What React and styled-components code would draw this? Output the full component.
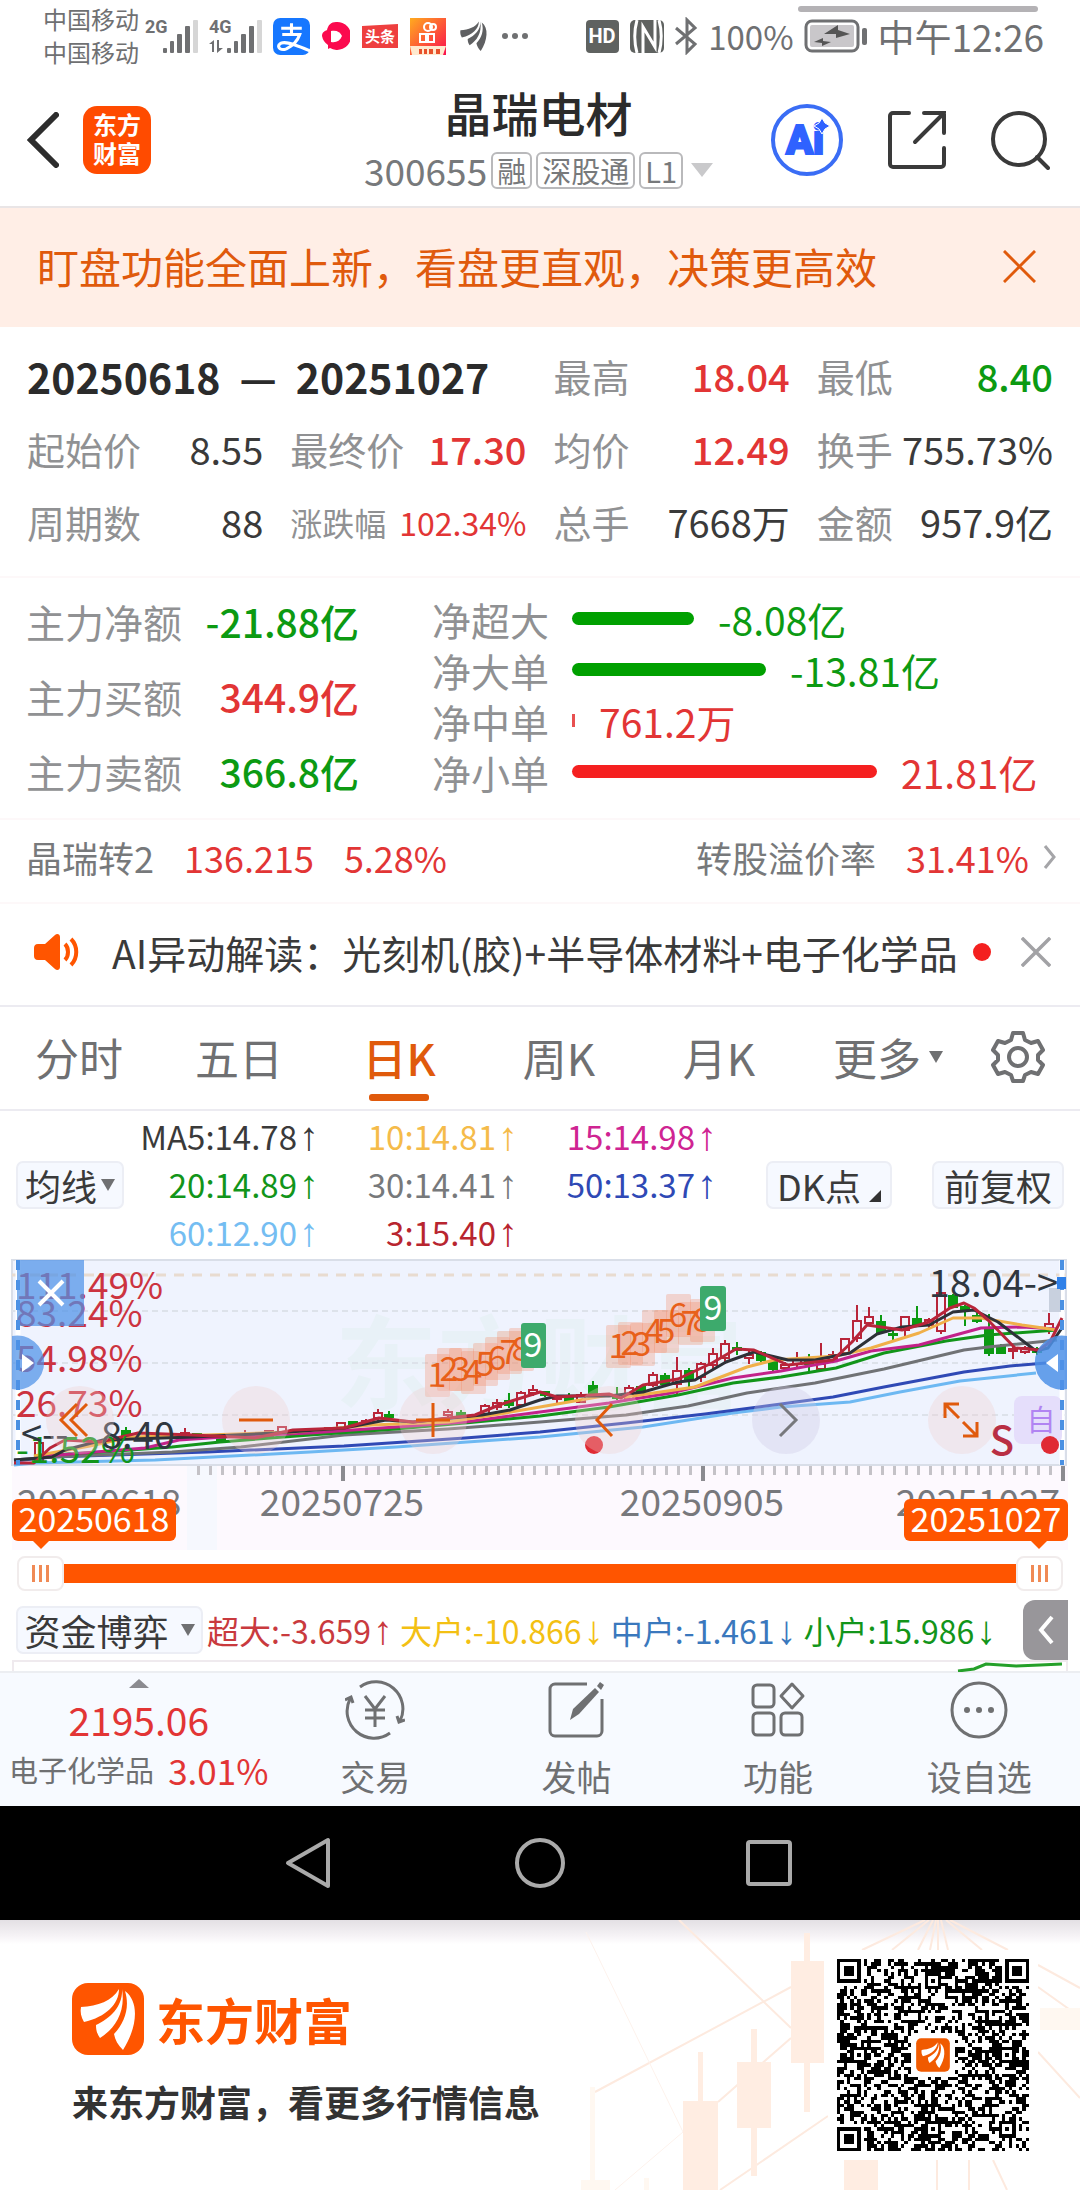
import React, { useState } from "react";
import styled, { createGlobalStyle, css } from "styled-components";

const GlobalStyle = createGlobalStyle`
  * {
    box-sizing: border-box;
  }
  body {
    margin: 0;
    background: #fff;
    color: #333;
    font-family: "Noto Sans CJK SC", sans-serif;
  }
  button {
    margin: 0;
    padding: 0;
    border: 0;
    background: none;
    color: inherit;
    font: inherit;
    cursor: pointer;
  }
  svg {
    display: block;
  }
`;

const RED = "#e23535";
const GREEN = "#0c9a12";
const ORANGE = "#e05a0c";

const Page = styled.div`
  width: 100%;
  overflow: hidden;
`;

/* ---------- status bar ---------- */

const StatusBar = styled.div`
  position: relative;
  display: flex;
  justify-content: space-between;
  height: 75px;
  padding: 4px 36px 0 43px;
  color: #6f7072;
`;
const ScrollHint = styled.div`
  position: absolute;
  top: 6px;
  right: 42px;
  width: 240px;
  height: 6px;
  border-radius: 3px;
  background: #b4b2b5;
`;
const Carriers = styled.div`
  display: flex;
  flex-direction: column;
  justify-content: center;
  height: 62px;
  margin-right: 6px;
  font-size: 24px;
  line-height: 33px;
`;
const StatusGroup = styled.div`
  display: flex;
  height: 64px;
  align-items: center;
  gap: ${(p) => p.$gap}px;
`;
const StatusLeft = styled.div`
  display: flex;
`;
const StatusText = styled.span`
  font-size: ${(p) => p.$size}px;
  line-height: 40px;
`;

/* ---------- header ---------- */

const Header = styled.header`
  display: grid;
  grid-template-columns: 1fr auto 1fr;
  align-items: center;
  height: 133px;
  padding: 0 30px 2px 27px;
  border-bottom: 2px solid #e9e5e6;
`;
const HeaderLeft = styled.div`
  display: flex;
  align-items: center;
  gap: 24px;
`;
const HeaderRight = styled.div`
  display: flex;
  align-items: center;
  justify-content: flex-end;
  gap: 43px;
`;
const AppBadge = styled.div`
  width: 68px;
  height: 68px;
  padding-top: 3px;
  border-radius: 14px;
  background: #ff4b00;
  color: #fff;
  font-size: 24px;
  font-weight: 700;
  line-height: 29px;
  text-align: center;
`;
const TitleBlock = styled.div`
  display: flex;
  flex-direction: column;
  align-items: center;
  gap: 7px;
  padding-bottom: 10px;
`;
const Title = styled.h1`
  margin: 0;
  font-size: 47px;
  font-weight: 500;
  line-height: 64px;
  color: #2b2b2b;
`;
const CodeRow = styled.div`
  display: flex;
  align-items: center;
  gap: 4px;
  color: #77797b;
  font-size: 37px;
  line-height: 38px;
`;
const Tag = styled.span`
  height: 37px;
  padding: 0 4px;
  border: 2px solid #b9b9bb;
  border-radius: 6px;
  font-size: 29px;
  line-height: 32px;
`;

/* ---------- banner ---------- */

const Banner = styled.section`
  display: flex;
  align-items: center;
  justify-content: space-between;
  height: 119px;
  padding: 0 44px 3px 37px;
  background: #ffeee6;
  color: ${ORANGE};
  font-size: 42px;
  line-height: 60px;
`;

/* ---------- stats ---------- */

const Stats = styled.section`
  display: grid;
  grid-template-columns: repeat(4, 1fr);
  column-gap: 27px;
  grid-auto-rows: 73px;
  padding: 12px 27px 18px;
  border-bottom: 2px solid #fdf8f9;
`;
const DateRange = styled.div`
  grid-column: span 2;
  display: flex;
  align-items: center;
  gap: 19px;
  color: #2b2b2b;
  font-size: 41px;
  font-weight: 700;
`;
const Stat = styled.div`
  display: flex;
  align-items: center;
  justify-content: space-between;
  white-space: nowrap;
  font-size: ${(p) => p.$size || 38}px;
`;
const Label = styled.span`
  color: #909193;
`;
const Value = styled.span`
  color: ${(p) => p.$color || "#3a3a3a"};
  font-weight: ${(p) => (p.$medium ? 500 : 400)};
`;

/* ---------- capital flow ---------- */

const Flow = styled.section`
  display: grid;
  grid-template-columns: 333px 1fr;
  column-gap: 73px;
  padding: 5px 27px 10px 26px;
  border-bottom: 2px solid #fdf8f9;
`;
const FlowTotals = styled.div`
  display: grid;
  grid-auto-rows: 75px;
`;
const FlowBars = styled.div`
  display: grid;
  grid-auto-rows: 51px;
  padding-top: 10px;
`;
const FlowRow = styled.div`
  display: flex;
  align-items: center;
  font-size: 39px;
`;
const FlowBar = styled.div`
  height: 13px;
  margin: 0 24px 0 23px;
  border-radius: ${(p) => (p.$thin ? 0 : 7)}px;
  background: ${(p) => p.$color};
`;

/* ---------- bond + news ---------- */

const Bond = styled.a`
  display: flex;
  align-items: center;
  height: 84px;
  padding: 0 23px 9px 26px;
  border-bottom: 2px solid #fdf8f9;
  color: #77797b;
  font-size: 36px;
  text-decoration: none;
`;
const BondValue = styled.span`
  margin-left: 30px;
  color: ${RED};
`;
const Spacer = styled.span`
  flex: 1;
`;
const News = styled.section`
  display: flex;
  align-items: center;
  height: 103px;
  padding: 0 29px 6px 34px;
  border-bottom: 2px solid #ecebf1;
  color: #3a3a3a;
  font-size: 39px;
  white-space: nowrap;
`;
const NewsText = styled.span`
  flex: 1;
  margin-left: 32px;
`;
const Dot = styled.span`
  width: 18px;
  height: 18px;
  margin-right: 30px;
  border-radius: 50%;
  background: #f4201f;
`;

/* ---------- tabs ---------- */

const Tabs = styled.nav`
  display: grid;
  grid-template-columns: repeat(5, 160fr) 178fr 82fr;
  height: 104px;
  padding-right: 20px;
  border-bottom: 2px solid #ecebf1;
`;
const Tab = styled.button`
  display: flex;
  align-items: center;
  justify-content: center;
  gap: 8px;
  position: relative;
  padding: 0 2px 2px 0;
  color: ${(p) => (p.$active ? ORANGE : "#6f7072")};
  font-size: 44px;
  ${(p) =>
    p.$active &&
    css`
      font-weight: 500;
      &::after {
        content: "";
        position: absolute;
        bottom: 8px;
        width: 60px;
        height: 7px;
        border-radius: 3px;
        background: ${ORANGE};
      }
    `}
`;
const Triangle = styled.span`
  width: 0;
  height: 0;
  border: ${(p) => p.$size || 7}px solid transparent;
  border-bottom: 0;
  border-top: ${(p) => p.$tall || 12}px solid ${(p) => p.$color || "#6f7072"};
`;

/* ---------- moving averages ---------- */

const Averages = styled.section`
  display: flex;
  align-items: center;
  justify-content: space-between;
  height: 148px;
  padding: 0 16px;
`;
const AverageGrid = styled.div`
  display: grid;
  grid-template-columns: 195px 199px 199px;
  grid-auto-rows: 48px;
  margin-right: auto;
`;
const Average = styled.span`
  color: ${(p) => p.$color};
  font-size: ${(p) => p.$size || 33}px;
  line-height: 46px;
  text-align: right;
`;
const Arrow = styled.span`
  margin-left: 2px;
  font-family: "Liberation Sans", sans-serif;
  font-size: 40px;
`;
const Chip = styled.button`
  display: flex;
  align-items: center;
  justify-content: center;
  gap: ${(p) => p.$inner || 4}px;
  width: ${(p) => p.$width}px;
  height: 48px;
  margin-left: ${(p) => p.$gap || 0}px;
  border: 2px solid #eceef5;
  border-radius: 7px;
  background: #f6f9ff;
  color: #3a3a3a;
  font-size: 36px;
  line-height: 42px;
  white-space: nowrap;
`;
const Corner = styled.span`
  align-self: flex-end;
  margin-bottom: 5px;
  border-left: 12px solid transparent;
  border-bottom: 12px solid #333;
`;

/* ---------- chart ---------- */

const Chart = styled.section`
  position: relative;
`;
const ChartSvg = styled.svg`
  width: 100%;
  height: auto;
  font-family: "Noto Sans CJK SC", sans-serif;
`;
const ChartTools = styled.div`
  position: absolute;
  top: 127px;
  left: 46px;
  right: 84px;
  display: flex;
  justify-content: space-between;
`;
const ToolButton = styled.button`
  width: 68px;
  height: 68px;
  border-radius: 50%;
  background: ${(p) => (p.$muted ? "rgba(205, 200, 230, 0.35)" : "rgba(238, 205, 205, 0.32)")};
`;
const DateFlag = styled.output`
  position: absolute;
  bottom: 9px;
  ${(p) => (p.$right ? "right: 12px" : "left: 12px")};
  width: 164px;
  height: 42px;
  border-radius: 6px;
  background: #ff5500;
  color: #fff;
  font-size: 34px;
  line-height: 38px;
  text-align: center;
  &::after {
    content: "";
    position: absolute;
    top: 41px;
    ${(p) => (p.$right ? "right: 20px" : "left: 20px")};
    border: 9px solid transparent;
    border-top-color: #ff5500;
    border-bottom: 0;
  }
`;
const CloseRange = styled.button`
  position: absolute;
  top: 1px;
  left: 17px;
  width: 67px;
  height: 66px;
  background: rgba(77, 145, 232, 0.72);
`;

/* ---------- range slider ---------- */

const Range = styled.div`
  position: relative;
  height: 50px;
  padding: 14px 17px 0;
`;
const RangeFill = styled.div`
  height: 19px;
  background: #ff5500;
`;
const thumb = css`
  appearance: none;
  width: 47px;
  height: 35px;
  border: 2px solid #f1ecec;
  border-radius: 8px;
  background:
    linear-gradient(#f08a55, #f08a55) 13px 7px / 3px 17px no-repeat,
    linear-gradient(#f08a55, #f08a55) 20px 7px / 3px 17px no-repeat,
    linear-gradient(#f08a55, #f08a55) 27px 7px / 3px 17px no-repeat,
    #fff;
  pointer-events: auto;
`;
const RangeInput = styled.input`
  appearance: none;
  position: absolute;
  top: 5px;
  left: 17px;
  width: calc(100% - 34px);
  height: 37px;
  margin: 0;
  background: none;
  pointer-events: none;
  &::-webkit-slider-thumb {
    ${thumb}
  }
  &::-moz-range-thumb {
    ${thumb}
  }
`;

/* ---------- fund indicator ---------- */

const Fund = styled.section`
  display: flex;
  align-items: center;
  height: 60px;
  padding: 0 12px 0 16px;
  white-space: nowrap;
`;
const FundValues = styled.div`
  flex: 1;
  display: flex;
  gap: 7px;
  margin-left: 4px;
`;
const Collapse = styled.button`
  display: flex;
  align-items: center;
  justify-content: center;
  width: 45px;
  height: 60px;
  border-radius: 12px 0 0 12px;
  background: #98969a;
`;
const FundChart = styled.div`
  display: flex;
  justify-content: flex-end;
  height: 11px;
  margin: 0 12px;
  border: 2px solid #efeaee;
  border-bottom: 0;
`;

/* ---------- bottom bar ---------- */

const BottomBar = styled.nav`
  display: grid;
  grid-template-columns: 274fr repeat(4, 201fr);
  height: 135px;
  border-top: 2px solid #eceef2;
  background: #f7faff;
  color: #6f7072;
`;
const IndexButton = styled.button`
  display: flex;
  flex-direction: column;
  align-items: center;
  padding: 6px 0 0 3px;
  white-space: nowrap;
`;
const IndexPrice = styled.span`
  height: 48px;
  margin-top: 7px;
  color: ${RED};
  font-size: 39px;
  line-height: 48px;
`;
const IndexRow = styled.span`
  display: flex;
  align-items: center;
  gap: 14px;
  height: 52px;
  font-size: 29px;
`;
const IndexChange = styled.span`
  color: ${RED};
  font-size: 35px;
`;
const NavButton = styled.button`
  display: flex;
  flex-direction: column;
  align-items: center;
  padding-top: 6px;
  font-size: 35px;
  line-height: 46px;
`;
const NavLabel = styled.span`
  margin-top: 12px;
`;
const SystemBar = styled.div`
  display: flex;
  align-items: center;
  justify-content: center;
  gap: 178px;
  height: 114px;
  background: #000;
`;

/* ---------- footer ---------- */

const Footer = styled.footer`
  position: relative;
  display: flex;
  justify-content: space-between;
  height: 270px;
  padding: 30px 42px 0 72px;
  background: linear-gradient(#e3e0e4, #f6f3f6 16px, #fff 24px);
`;
const FooterArt = styled.svg`
  position: absolute;
  top: 0;
  right: 0;
  width: 1080px;
  height: 270px;
`;
const Brand = styled.div`
  position: relative;
  display: flex;
  flex-direction: column;
  gap: 22px;
  padding-top: 33px;
`;
const BrandRow = styled.div`
  display: flex;
  align-items: center;
  gap: 12px;
  color: #ff5500;
  font-size: 49px;
  font-weight: 700;
  line-height: 70px;
`;
const Slogan = styled.p`
  margin: 0;
  color: #333;
  font-size: 36px;
  font-weight: 700;
  line-height: 48px;
`;
const QrBox = styled.div`
  position: relative;
  width: 210px;
  height: 210px;
  padding: 9px;
  background: #fff;
`;

/* ---------- data ---------- */

const stats = [
  ["最高", "18.04", RED],
  ["最低", "8.40", GREEN],
  ["起始价", "8.55"],
  ["最终价", "17.30", RED],
  ["均价", "12.49", RED],
  ["换手", "755.73%"],
  ["周期数", "88"],
  ["涨跌幅", "102.34%", RED, 32],
  ["总手", "7668万"],
  ["金额", "957.9亿"],
];

const totals = [
  ["主力净额", "-21.88亿", GREEN],
  ["主力买额", "344.9亿", RED],
  ["主力卖额", "366.8亿", GREEN],
];

const orders = [
  ["净超大", "-8.08亿", 122, GREEN, "#00a000"],
  ["净大单", "-13.81亿", 194, GREEN, "#00a000"],
  ["净中单", "761.2万", 3, RED, "#e85050"],
  ["净小单", "21.81亿", 305, RED, "#f52020"],
];

const averages = [
  ["MA5:14.78", "#3a3a3a"],
  ["10:14.81", "#f5bb4a"],
  ["15:14.98", "#cf2492"],
  ["20:14.89", "#12951a"],
  ["30:14.41", "#77797b"],
  ["50:13.37", "#2f49b5"],
  ["60:12.90", "#74bdf2"],
  ["3:15.40", "#b8252f"],
];

const funds = [
  ["超大:-3.659", "↑", "#c93a3e"],
  ["大户:-10.866", "↓", "#f3c013"],
  ["中户:-1.461", "↓", "#3a78bd"],
  ["小户:15.986", "↓", "#12951a"],
];

const tabs = ["分时", "五日", "日K", "周K", "月K"];

const lines = [
  ["#6db8f2", "14,215 34,213 155,210 310,202 396,197 540,187 643,177 733,163 781,157 850,152 900,142 960,131 1036,123"],
  ["#2f49b5", "14,211 52,207 207,202 344,196 465,188 540,182 626,173 705,164 781,154 833,147 884,137 964,122 1010,116 1046,113"],
  ["#707275", "14,210 52,207 172,202 241,197 344,185 448,179 540,172 626,165 688,156 747,143 815,133 884,119 964,100 988,97 1057,90"],
  ["#12951a", "34,206 103,202 172,197 220,192 310,185 396,179 465,173 540,166 609,157 678,145 733,133 781,127 836,118 884,103 946,91 988,85 1057,80"],
  ["#c2228a", "34,207 145,198 179,190 224,187 310,183 396,177 465,172 540,162 609,153 671,143 733,128 781,121 836,111 871,101 919,95 981,78 1022,77 1057,79"],
  ["#f0b04a", "34,206 90,196 131,187 207,185 293,182 372,175 448,172 500,164 540,157 609,145 626,147 695,137 747,117 774,110 836,106 871,98 919,83 953,68 981,68 1022,75 1057,80"],
  ["#2d3138", "14,210 52,207 65,200 103,190 193,187 275,183 344,178 386,170 413,172 482,165 510,160 540,150 557,146 609,146 643,142 678,132 695,130 726,112 754,102 788,110 815,110 850,103 877,84 902,77 929,75 953,62 974,60 998,72 1036,101 1048,98 1062,78"],
  ["#b8253a", "14,213 34,213 50,198 65,190 100,192 138,183 193,185 255,188 293,180 344,178 379,168 413,172 475,165 499,155 540,142 557,147 609,144 621,148 643,135 678,129 712,113 736,99 754,100 788,115 833,110 852,92 867,75 902,80 929,72 950,58 964,53 974,58 988,70 1015,98 1039,100 1050,92 1062,68"],
];

// x, high, body top, body bottom, low, rising
const candles = [
  [39, 187, 193, 212, 212, 1],
  [126, 177, 181, 185, 187, 0],
  [185, 178, 183, 188, 188, 1],
  [197, 183, 184, 186, 187, 0],
  [221, 186, 189, 191, 193, 0],
  [245, 180, 184, 187, 190, 1],
  [257, 182, 184, 186, 188, 0],
  [269, 180, 181, 187, 188, 1],
  [282, 176, 177, 182, 184, 1],
  [329, 177, 178, 181, 182, 1],
  [341, 172, 173, 179, 180, 1],
  [353, 171, 172, 174, 175, 0],
  [366, 169, 171, 174, 176, 1],
  [378, 159, 163, 168, 171, 1],
  [389, 161, 165, 167, 170, 0],
  [448, 159, 162, 165, 167, 1],
  [461, 160, 163, 165, 166, 0],
  [485, 154, 156, 164, 165, 1],
  [497, 149, 153, 157, 160, 1],
  [509, 143, 151, 155, 158, 0],
  [521, 141, 143, 155, 157, 1],
  [533, 135, 140, 143, 146, 1],
  [545, 141, 142, 145, 147, 0],
  [557, 146, 147, 149, 153, 1],
  [569, 143, 146, 151, 152, 0],
  [581, 142, 145, 152, 153, 1],
  [593, 131, 136, 143, 145, 0],
  [617, 137, 146, 148, 150, 0],
  [629, 135, 138, 149, 151, 1],
  [641, 136, 137, 141, 143, 0],
  [653, 122, 125, 135, 137, 1],
  [665, 123, 126, 134, 136, 0],
  [677, 107, 121, 134, 146, 1],
  [689, 118, 121, 130, 137, 0],
  [701, 112, 114, 127, 132, 1],
  [713, 98, 104, 115, 119, 1],
  [725, 90, 94, 108, 114, 1],
  [737, 92, 98, 100, 105, 0],
  [749, 101, 105, 108, 114, 1],
  [761, 101, 103, 110, 112, 0],
  [773, 109, 112, 119, 121, 0],
  [785, 112, 115, 118, 120, 1],
  [797, 102, 109, 114, 117, 1],
  [809, 104, 112, 114, 123, 0],
  [821, 93, 114, 119, 120, 1],
  [833, 101, 105, 110, 112, 1],
  [845, 88, 89, 103, 105, 1],
  [857, 55, 71, 88, 92, 1],
  [869, 57, 67, 73, 76, 1],
  [881, 65, 72, 82, 84, 0],
  [893, 80, 84, 85, 90, 0],
  [905, 66, 67, 80, 86, 1],
  [917, 56, 69, 74, 76, 0],
  [929, 68, 70, 75, 79, 1],
  [941, 42, 43, 81, 84, 1],
  [953, 44, 46, 57, 58, 0],
  [965, 55, 57, 60, 76, 0],
  [977, 63, 66, 71, 73, 0],
  [989, 64, 78, 103, 106, 0],
  [1001, 94, 97, 103, 104, 0],
  [1013, 96, 99, 101, 109, 1],
  [1025, 96, 98, 102, 104, 1],
  [1037, 97, 99, 102, 105, 0],
  [1049, 63, 74, 80, 84, 1],
];

// x, box top
const countFirst = [[437, 104], [449, 98], [461, 98], [473, 101], [485, 93], [497, 87], [509, 81], [521, 78]];
const countSecond = [[618, 75], [630, 72], [642, 73], [654, 60], [666, 60], [678, 44], [690, 52], [702, 49]];

const ticks = [];
for (let x = 198; x <= 1062; x += 12) {
  ticks.push(x);
}

/* ---------- drawings ---------- */

const Feather = () => (
  <>
    <path d="M9 24C26 23 40 18 47 6c0 15-13 28-35 33-3-5-4-10-3-15z" />
    <path d="M50 6c1 17-11 29-26 36 0 5 1 9 4 13C42 46 54 30 50 6z" />
    <path d="M53 8c5 16 0 31-11 43 1 6 4 11 9 16 14-22 17-48 2-59z" />
  </>
);

const Signal = ({ label, data }) => (
  <svg width="54" height="38" viewBox="0 0 54 38" fill="#6f7072">
    <text x="0" y="16" fontSize="18" fontWeight="700" fontFamily="Roboto, sans-serif">
      {label}
    </text>
    {data && <path d="M5 23v12H3v-8H0zM8 23h2v8h4l-6 5z" />}
    <rect x="18" y="31" width="4" height="5" rx="1" />
    <rect x="25" y="24" width="4" height="12" rx="1" />
    <rect x="32" y="17" width="5" height="19" rx="1" />
    <rect x="40" y="9" width="5" height="27" rx="1" />
    <rect x="48" y="3" width="5" height="33" rx="1" fill="#d6d6d6" />
  </svg>
);

const Cross = ({ size, color, width }) => (
  <svg width={size} height={size} viewBox="0 0 34 34" stroke={color} strokeWidth={width} fill="none">
    <path d="M1 1l32 32M33 1L1 33" />
  </svg>
);

const StatusIcons = () => (
  <StatusGroup $gap={12}>
    <svg width="37" height="37" viewBox="0 0 36 36">
      <rect width="36" height="36" rx="7" fill="#1677ff" />
      <g stroke="#fff" strokeWidth="3" fill="none">
        <path d="M8 10h20M18 5v11M9 16h17c-2 6-7 11-13 14-5 2-9-1-7-4 3-5 14-1 30 6" />
      </g>
    </svg>
    <svg width="28" height="37" viewBox="0 0 28 37">
      <path d="M14 4a14 14 0 1 1-6 26l-2 1 0-4A14 14 0 0 1 0 18c0-4 3-5 5-6 1-5 4-8 9-8z" fill="#fb0a4e" />
      <path d="M9 13c6-1 9 1 11 5-2 5-6 7-11 6z" fill="#fff" />
    </svg>
    <svg width="36" height="37" viewBox="0 0 36 37">
      <path d="M0 8l36-2v24H0z" fill="#ee3f3f" />
      <text x="18" y="24" fontSize="15" fontWeight="700" fill="#fff" textAnchor="middle">
        头条
      </text>
    </svg>
    <svg width="36" height="37" viewBox="0 0 36 37">
      <defs>
        <linearGradient id="lite" x1="0" y1="0" x2="1" y2="1">
          <stop offset="0" stopColor="#ffab1f" />
          <stop offset="1" stopColor="#fb0f4d" />
        </linearGradient>
      </defs>
      <rect width="36" height="37" fill="url(#lite)" />
      <g stroke="#fff" strokeWidth="2" fill="none">
        <circle cx="18" cy="9" r="4" />
        <circle cx="23" cy="9" r="3" />
        <path d="M10 16h6v8h-6zM18 16h6v8h-6z" />
      </g>
      <path d="M0 28h36l-3 9H2z" fill="#ffe9cf" />
      <path d="M9 31h3v5H9zM14 31h3v5h-3zM19 31h4v5h-4zM26 31h4v5h-4z" fill="#e8512b" />
    </svg>
    <svg width="32" height="34" viewBox="4 2 66 68" fill="#5f6062">
      <Feather />
    </svg>
    <svg width="26" height="6" viewBox="0 0 26 6" fill="#6f7072">
      <circle cx="3" cy="3" r="3" />
      <circle cx="13" cy="3" r="3" />
      <circle cx="23" cy="3" r="3" />
    </svg>
  </StatusGroup>
);

const MarketChart = () => (
  <ChartSvg viewBox="0 9 1080 291" role="img" aria-label="晶瑞电材日K线">
    <rect x="12" y="216" width="1056" height="84" fill="#fdf9fe" />
    <rect x="187" y="216" width="30" height="84" fill="#f6f8fe" />
    <rect x="12" y="10" width="1054" height="205" fill="#eff3fe" stroke="#d9dee8" strokeWidth="2" />
    <text x="335" y="152" fontSize="102" fontWeight="700" fill="#e8f1f7">
      东方财富
    </text>
    <path d="M12 25H1066" stroke="#e8dbd0" strokeWidth="3" strokeDasharray="10 8" />
    <path d="M12 61H1066M12 113H1066M12 165H1066" stroke="#dde2ea" strokeWidth="2" strokeDasharray="6 4" />
    <path d="M18 10V215M1062 10V215" stroke="#fff" strokeWidth="5" />

    {[countFirst, countSecond].map((group, i) => (
      <g key={i}>
        {group.map(([x, y]) => (
          <rect key={x} x={x - 12} y={y} width="25" height="43" rx="2" fill="rgba(245, 125, 85, 0.27)" />
        ))}
        {group.map(([x, y], n) => (
          <text key={x} x={x} y={y + 33} fontSize="34" fill="#e8601a" textAnchor="middle">
            {n + 1}
          </text>
        ))}
      </g>
    ))}

    {candles.map(([x, high, top, bottom, low, up]) => (
      <g key={x} stroke={up ? "#b8253a" : "#0c9a12"} strokeWidth="2" fill={up ? "#eff3fe" : "#0c9a12"}>
        <path d={`M${x} ${high}V${low}`} />
        <rect x={x - 4} y={top} width="8" height={bottom - top} />
      </g>
    ))}
    {lines.map(([color, points]) => (
      <polyline key={color} points={points} fill="none" stroke={color} strokeWidth="3" strokeLinejoin="round" />
    ))}

    <g fontSize="37" fill="#cc3340">
      <text x="16" y="49">111.49%</text>
      <text x="16" y="77">83.24%</text>
      <text x="16" y="122">54.98%</text>
      <text x="16" y="167">26.73%</text>
      <text x="16" y="213" fill="#12951a">-1.52%</text>
    </g>

    <g fill="#3daa6c">
      <rect x="521" y="73" width="25" height="45" rx="3" />
      <rect x="700" y="36" width="26" height="45" rx="3" />
    </g>
    <g fontSize="34" fill="#fff" textAnchor="middle">
      <text x="533" y="107">9</text>
      <text x="713" y="70">9</text>
    </g>

    <g fontSize="38" fill="#2f3740">
      <text x="21" y="198">&lt;--</text>
      <text x="101" y="199">8.40</text>
      <text x="1058" y="47" textAnchor="end">
        18.04-&gt;
      </text>
    </g>

    <rect x="1014" y="146" width="48" height="48" rx="8" fill="#e5defb" />
    <text x="1041" y="181" fontSize="29" fill="#b184f2" textAnchor="middle">
      自
    </text>
    <text x="1002" y="205" fontSize="40" fontWeight="500" fill="#b92f44" textAnchor="middle">
      S
    </text>
    <circle cx="594" cy="195" r="9" fill="#e02a34" />
    <circle cx="1050" cy="195" r="9" fill="#e02a34" />

    <rect x="1049" y="38" width="12" height="24" fill="#c8d0de" />
    <path d="M18 10V215M1062 10V215" stroke="#4a90e2" strokeWidth="4" strokeDasharray="10 10" />
    <rect x="1057" y="27" width="9" height="12" fill="#2f80e8" />
    <path d="M12 86a27 27 0 1 1 0 53z" fill="#4d91e8" opacity="0.72" />
    <path d="M22 104l12 9-12 9z" fill="#fff" />
    <path d="M1067 86a27 27 0 1 0 0 53z" fill="#4d91e8" opacity="0.85" />
    <path d="M1058 104l-12 9 12 9z" fill="#fff" />

    {ticks.map((x) => {
      const major = (x - 342) % 360 === 0;
      return (
        <rect
          key={x}
          x={x - 1}
          y="216"
          width={major ? 4 : 3}
          height={major ? 15 : 9}
          fill={major ? "#8b8b90" : "#c4c2c7"}
        />
      );
    })}
    <g fontSize="37" fill="#77787c">
      <text x="17" y="266">20250618</text>
      <text x="342" y="266" textAnchor="middle">
        20250725
      </text>
      <text x="702" y="266" textAnchor="middle">
        20250905
      </text>
      <text x="1060" y="266" textAnchor="end">
        20251027
      </text>
    </g>
  </ChartSvg>
);

const toolIcons = [
  ["向左快移", "M31 18L15 34l16 16M41 18L25 34l16 16"],
  ["缩小", "M17 34h34"],
  ["放大", "M17 34h34M34 17v34"],
  ["左移", "M37 18L22 34l15 16"],
  ["右移", "M28 18l16 16-16 16"],
  ["全屏", "M17 32V18h14M17 18l14 14M49 36v14H35M49 50L35 36"],
];

const QR_SIZE = 57;

const inBox = (x, y, left, top, size) => x >= left && x < left + size && y >= top && y < top + size;

function buildQr() {
  const last = QR_SIZE - 7;
  const finders = [[0, 0], [last, 0], [0, last]];
  const aligns = [[28, 6], [50, 28], [28, 50], [6, 28], [50, 50]];
  let seed = 20251027;
  let d = "";
  for (let y = 0; y < QR_SIZE; y++) {
    for (let x = 0; x < QR_SIZE; x++) {
      seed = (seed * 1103515245 + 12345) % 2147483648;
      let on = (seed >> 16) % 100 < 50;
      finders.forEach(([fx, fy]) => {
        if (inBox(x, y, fx - 1, fy - 1, 9)) {
          const r = Math.max(Math.abs(x - fx - 3), Math.abs(y - fy - 3));
          on = r === 3 || r < 2;
        }
      });
      aligns.forEach(([ax, ay]) => {
        const r = Math.max(Math.abs(x - ax), Math.abs(y - ay));
        if (r <= 2) on = r !== 1;
      });
      if (inBox(x, y, 22, 22, 13)) on = false;
      if (on) d += `M${x} ${y}h1v1h-1z`;
    }
  }
  return d;
}

const qrPath = buildQr();

const QrCode = () => (
  <svg width="192" height="192" viewBox="0 0 57 57" role="img" aria-label="二维码" shapeRendering="crispEdges">
    <path d={qrPath} />
    <rect x="23.5" y="23.5" width="10" height="10" rx="1.5" fill="#f05a00" shapeRendering="auto" />
    <g fill="#fff" transform="translate(24 24) scale(0.125)" shapeRendering="auto">
      <Feather />
    </g>
  </svg>
);

const FooterBackground = () => (
  <FooterArt viewBox="0 0 1080 270" aria-hidden="true">
    <g stroke="#fdeadf" strokeWidth="2" fill="none">
      <path d="M679 0L791 108M595 172L791 67M718 182l73-64M720 270l108-74" />
      <path d="M925 0l-63 30M929 0l-37 30M933 0l-15 30M936 0l-6 30M938 0v30M941 0l7 30M946 0l36 30M950 0l58 30" />
      <path d="M1038 45l42 23M1038 67l42 30M1038 132l42 46M937 240v30M969 240v30M993 240l14 30" />
    </g>
    <path d="M586 12L683 212 615 270" stroke="#fdf2ec" strokeWidth="1" fill="none" />
    <g fill="#ffede2">
      <rect x="791" y="41" width="33" height="102" />
      <rect x="804" y="13" width="6" height="179" />
      <rect x="737" y="142" width="34" height="66" />
      <rect x="751" y="109" width="6" height="147" />
      <rect x="683" y="181" width="35" height="89" />
      <rect x="698" y="132" width="5" height="49" />
      <rect x="844" y="240" width="34" height="30" />
    </g>
    <g fill="#fff8f1">
      <rect x="590" y="167" width="5" height="93" />
      <rect x="581" y="260" width="29" height="10" />
      <rect x="644" y="258" width="5" height="12" />
      <rect x="1040" y="88" width="40" height="22" />
    </g>
  </FooterArt>
);

const NavIcon = ({ children }) => (
  <svg width="60" height="62" viewBox="0 0 60 62" fill="none" stroke="#6f7072" strokeWidth="3">
    {children}
  </svg>
);

const App = () => {
  const [active, setActive] = useState("日K");
  const [start, setStart] = useState(0);
  const [end, setEnd] = useState(88);

  return (
    <Page>
      <GlobalStyle />

      <StatusBar>
        <ScrollHint />
        <StatusLeft>
          <Carriers>
            <span>中国移动</span>
            <span>中国移动</span>
          </Carriers>
          <StatusGroup $gap={10}>
            <Signal label="2G" />
            <Signal label="4G" data />
            <StatusIcons />
          </StatusGroup>
        </StatusLeft>
        <StatusGroup $gap={10}>
          <svg width="112" height="38" viewBox="0 0 112 38">
            <rect x="0" y="3" width="33" height="33" rx="4" fill="#5f6260" />
            <text x="16" y="26" fontSize="20" fontWeight="700" fill="#fff" textAnchor="middle" fontFamily="Roboto, sans-serif">
              HD
            </text>
            <rect x="44" y="3" width="34" height="33" rx="5" fill="#5f6260" />
            <path d="M51 3c-3 11-3 22 0 33M57 36V10l12 20V3M73 3c3 11 3 22 0 33" stroke="#fff" strokeWidth="3" fill="none" />
            <path d="M90 11l19 16-8 8V3l8 8-19 16" stroke="#6f7072" strokeWidth="3" fill="none" />
          </svg>
          <StatusText $size={33}>100%</StatusText>
          <svg width="64" height="36" viewBox="0 0 64 36">
            <rect x="2" y="3" width="52" height="30" rx="6" fill="none" stroke="#6f7072" strokeWidth="3" />
            <rect x="6" y="7" width="44" height="22" rx="2" fill="#c9c7ca" />
            <path d="M20 16l14-9v5l12 4-14 4v-4zM10 24l9-4v3l8 1-9 4v-3z" fill="#555" />
            <rect x="58" y="10" width="5" height="17" rx="2" fill="#6f7072" />
          </svg>
          <StatusText $size={37}>中午12:26</StatusText>
        </StatusGroup>
      </StatusBar>

      <Header>
        <HeaderLeft>
          <button aria-label="返回">
            <svg width="32" height="56" viewBox="0 0 32 56" fill="none" stroke="#2d2d2d" strokeWidth="6" strokeLinecap="round">
              <path d="M29 3L4 28l25 25" />
            </svg>
          </button>
          <AppBadge>
            东方
            <br />
            财富
          </AppBadge>
        </HeaderLeft>
        <TitleBlock>
          <Title>晶瑞电材</Title>
          <CodeRow>
            300655
            <Tag>融</Tag>
            <Tag>深股通</Tag>
            <Tag>L1</Tag>
            <Spacer />
            <Triangle $size={11} $tall={14} $color="#c9c9cb" />
          </CodeRow>
        </TitleBlock>
        <HeaderRight>
          <button aria-label="AI 助手">
            <svg width="74" height="74" viewBox="0 0 74 74">
              <circle cx="37" cy="37" r="34" fill="none" stroke="#3a6df5" strokeWidth="4" />
              <text x="35" y="51" fontSize="40" fontWeight="900" fontFamily="Roboto, sans-serif" fill="#2f62ff" stroke="#2f62ff" strokeWidth="2" textAnchor="middle">
                Ai
              </text>
              <path d="M52 15l3 5 5 3-5 3-3 5-3-5-5-3 5-3z" fill="#2f62ff" stroke="#fff" strokeWidth="1" />
            </svg>
          </button>
          <button aria-label="分享">
            <svg width="60" height="60" viewBox="0 0 60 60" fill="none" stroke="#3a3a3a" strokeWidth="4" strokeLinecap="round">
              <path d="M22 3H6a3 3 0 0 0-3 3v48a3 3 0 0 0 3 3h48a3 3 0 0 0 3-3V38M37 3h20v20M57 3L28 32" />
            </svg>
          </button>
          <button aria-label="搜索">
            <svg width="60" height="60" viewBox="0 0 60 60" fill="none" stroke="#3a3a3a" strokeWidth="4" strokeLinecap="round">
              <circle cx="29" cy="29" r="26" />
              <path d="M47 47l11 11" />
            </svg>
          </button>
        </HeaderRight>
      </Header>

      <Banner>
        盯盘功能全面上新，看盘更直观，决策更高效
        <button aria-label="关闭横幅">
          <Cross size={33} color={ORANGE} width={3} />
        </button>
      </Banner>

      <Stats>
        <DateRange>
          <span>20250618</span>
          <span>—</span>
          <span>20251027</span>
        </DateRange>
        {stats.map(([label, value, color, size]) => (
          <Stat key={label} $size={size}>
            <Label>{label}</Label>
            <Value $color={color} $medium={color && !size}>
              {value}
            </Value>
          </Stat>
        ))}
      </Stats>

      <Flow>
        <FlowTotals>
          {totals.map(([label, value, color]) => (
            <Stat key={label} $size={39}>
              <Label>{label}</Label>
              <Value $color={color} $medium>
                {value}
              </Value>
            </Stat>
          ))}
        </FlowTotals>
        <FlowBars>
          {orders.map(([label, value, width, color, fill]) => (
            <FlowRow key={label}>
              <Label>{label}</Label>
              <FlowBar $color={fill} $thin={width < 10} style={{ width }} />
              <Value $color={color}>{value}</Value>
            </FlowRow>
          ))}
        </FlowBars>
      </Flow>

      <Bond href="#bond">
        晶瑞转2
        <BondValue>136.215</BondValue>
        <BondValue>5.28%</BondValue>
        <Spacer />
        转股溢价率
        <BondValue>31.41%</BondValue>
        <svg width="28" height="26" viewBox="4 0 28 26" fill="none" stroke="#a5a5a8" strokeWidth="3">
          <path d="M20 2l9 11-9 11" />
        </svg>
      </Bond>

      <News>
        <svg width="46" height="38" viewBox="0 0 46 38" fill="#ff5500">
          <path d="M4 11h7l10-9c2-2 5-1 5 2v30c0 3-3 4-5 2l-10-9H4c-3 0-4-2-4-4v-8c0-2 1-4 4-4z" />
          <path d="M31 11c4 4 4 12 0 16M37 6c7 7 7 19 0 26" fill="none" stroke="#ff5500" strokeWidth="4" />
        </svg>
        <NewsText>AI异动解读：光刻机(胶)+半导体材料+电子化学品</NewsText>
        <Dot />
        <button aria-label="关闭解读">
          <Cross size={30} color="#a2a2a5" width={4} />
        </button>
      </News>

      <Tabs>
        {tabs.map((tab) => (
          <Tab key={tab} $active={tab === active} onClick={() => setActive(tab)}>
            {tab}
          </Tab>
        ))}
        <Tab>
          更多
          <Triangle />
        </Tab>
        <Tab aria-label="设置">
          <svg width="54" height="54" viewBox="0 0 54 54" fill="none" stroke="#6f7072" strokeWidth="4" strokeLinejoin="round">
            <path d="M22 3h10l2 7 6 3 7-2 5 9-5 5v5l5 5-5 9-7-2-6 3-2 6H22l-2-6-6-3-7 2-5-9 5-5v-5l-5-5 5-9 7 2 6-3z" />
            <circle cx="27" cy="27" r="9" />
          </svg>
        </Tab>
      </Tabs>

      <Averages>
        <Chip $width={108}>
          均线
          <Triangle />
        </Chip>
        <AverageGrid>
          {averages.map(([text, color]) => (
            <Average key={text} $color={color}>
              {text}
              <Arrow>↑</Arrow>
            </Average>
          ))}
        </AverageGrid>
        <Chip $width={126} $inner={8}>
          DK点
          <Corner />
        </Chip>
        <Chip $width={132} $gap={40}>
          前复权
        </Chip>
      </Averages>

      <Chart>
        <MarketChart />
        <CloseRange aria-label="关闭区间统计">
          <svg width="67" height="66" viewBox="0 0 67 66" stroke="#fff" strokeWidth="4">
            <path d="M22 21l24 24M46 21L22 45" />
          </svg>
        </CloseRange>
        <ChartTools>
          {toolIcons.map(([label, d]) => (
            <ToolButton key={label} aria-label={label} $muted={label === "右移"}>
              <svg width="68" height="68" viewBox="0 0 68 68" fill="none" stroke={label === "右移" ? "#77787c" : ORANGE} strokeWidth="3">
                <path d={d} />
              </svg>
            </ToolButton>
          ))}
        </ChartTools>
        <DateFlag>20250618</DateFlag>
        <DateFlag $right>20251027</DateFlag>
      </Chart>

      <Range>
        <RangeFill />
        <RangeInput
          type="range"
          aria-label="起始日期"
          min="0"
          max="88"
          value={start}
          onChange={(e) => setStart(Number(e.target.value))}
        />
        <RangeInput
          type="range"
          aria-label="结束日期"
          min="0"
          max="88"
          value={end}
          onChange={(e) => setEnd(Number(e.target.value))}
        />
      </Range>

      <Fund>
        <Chip $width={187} $inner={12}>
          资金博弈
          <Triangle />
        </Chip>
        <FundValues>
          {funds.map(([text, arrow, color]) => (
            <Average key={text} $color={color} $size={32}>
              {text}
              <Arrow>{arrow}</Arrow>
            </Average>
          ))}
        </FundValues>
        <Collapse aria-label="收起">
          <svg width="16" height="30" viewBox="0 0 16 30" fill="none" stroke="#fff" strokeWidth="4">
            <path d="M14 2L3 15l11 13" />
          </svg>
        </Collapse>
      </Fund>
      <FundChart>
        <svg width="110" height="10" viewBox="0 0 110 10" fill="none" stroke="#25a02a" strokeWidth="3">
          <path d="M2 9l16-2 12-5 30 2 24-1 22-1" />
        </svg>
      </FundChart>

      <BottomBar>
        <IndexButton>
          <svg width="20" height="9" viewBox="0 0 20 9" fill="#8b8b90">
            <path d="M10 0l10 9H0z" />
          </svg>
          <IndexPrice>2195.06</IndexPrice>
          <IndexRow>
            电子化学品
            <IndexChange>3.01%</IndexChange>
          </IndexRow>
        </IndexButton>
        <NavButton>
          <NavIcon>
            <path d="M15 8a27 27 0 0 1 40 34M60 41l-6 2-2-6M45 54A27 27 0 0 1 5 20M0 21l6-3 2 6" />
            <path d="M20 17l10 13 10-13M30 30v18M20 31h20M20 39h20" />
          </NavIcon>
          <NavLabel>交易</NavLabel>
        </NavButton>
        <NavButton>
          <NavIcon>
            <path d="M40 5H8a5 5 0 0 0-5 5v42a5 5 0 0 0 5 5h42a5 5 0 0 0 5-5V20" />
            <path d="M23 41l3-11L48 9l4 4-20 22z" fill="#6f7072" stroke="none" />
            <path d="M50 7l3-4 4 3-3 5z" fill="#6f7072" stroke="none" />
          </NavIcon>
          <NavLabel>发帖</NavLabel>
        </NavButton>
        <NavButton>
          <NavIcon>
            <rect x="5" y="6" width="21" height="22" rx="4" />
            <rect x="5" y="34" width="21" height="22" rx="4" />
            <rect x="33" y="34" width="21" height="22" rx="4" />
            <path d="M44 5l11 12-11 12-11-12z" strokeLinejoin="round" />
          </NavIcon>
          <NavLabel>功能</NavLabel>
        </NavButton>
        <NavButton>
          <NavIcon>
            <circle cx="30" cy="31" r="27" />
            <g fill="#6f7072" stroke="none">
              <circle cx="18" cy="31" r="3" />
              <circle cx="30" cy="31" r="3" />
              <circle cx="42" cy="31" r="3" />
            </g>
          </NavIcon>
          <NavLabel>设自选</NavLabel>
        </NavButton>
      </BottomBar>

      <SystemBar>
        <button aria-label="系统返回">
          <svg width="52" height="54" viewBox="0 0 52 54" fill="none" stroke="#aaa" strokeWidth="4" strokeLinejoin="round">
            <path d="M44 4v46L4 27z" />
          </svg>
        </button>
        <button aria-label="主屏幕">
          <svg width="52" height="54" viewBox="0 0 52 54" fill="none" stroke="#aaa" strokeWidth="4">
            <circle cx="26" cy="27" r="23" />
          </svg>
        </button>
        <button aria-label="最近任务">
          <svg width="52" height="54" viewBox="0 0 52 54" fill="none" stroke="#aaa" strokeWidth="4">
            <rect x="4" y="6" width="42" height="42" rx="2" />
          </svg>
        </button>
      </SystemBar>

      <Footer>
        <FooterBackground />
        <Brand>
          <BrandRow>
            <svg width="72" height="72" viewBox="0 0 72 72">
              <rect width="72" height="72" rx="16" fill="#ff5500" />
              <g fill="#fff">
                <Feather />
              </g>
            </svg>
            东方财富
          </BrandRow>
          <Slogan>来东方财富，看更多行情信息</Slogan>
        </Brand>
        <QrBox>
          <QrCode />
        </QrBox>
      </Footer>
    </Page>
  );
};

export default App;
